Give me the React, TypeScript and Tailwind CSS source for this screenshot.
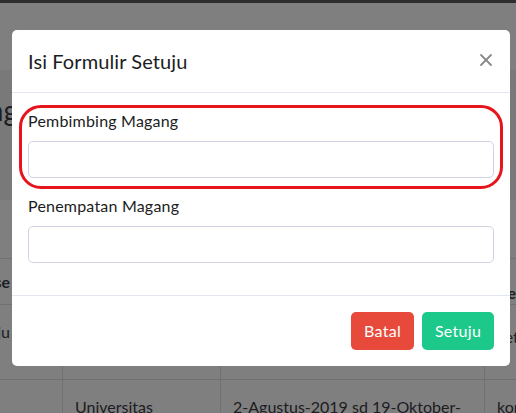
import { X } from 'lucide-react';

const font = { fontFamily: 'Lato, "Open Sans", sans-serif' };

function BackgroundPage() {
  return (
    <div className="w-[516px] h-[413px] bg-white overflow-hidden text-[#3a3b45]">
      <div className="h-[3px] bg-[#5a5a5a]" />
      <div className="h-[67px] bg-white" />
      {/* card header with heading */}
      <div className="h-[130px] bg-[#f3f3f3] pt-[26px]">
        <div className="w-[18px] flex justify-end">
          <h1 className="text-[28px] leading-none whitespace-nowrap">Data Magang</h1>
        </div>
      </div>
      <div className="h-[58px] bg-white" />
      {/* table, scrolled to the right */}
      <div className="-ml-[100px] w-[700px] whitespace-nowrap">
        <div className="grid grid-cols-[162px_158px_264px_116px] h-[47px] border-t border-b border-[#e3e3e3] font-bold">
          <div className="flex items-center justify-end pr-[52px]">Course</div>
          <div className="border-l border-[#e3e3e3]" />
          <div className="border-l border-[#e3e3e3]" />
          <div className="border-l border-[#e3e3e3] flex items-center pl-3 pt-[22px]">Keterangan</div>
        </div>
        <div className="grid grid-cols-[162px_158px_264px_116px] h-[75px] border-b border-[#e3e3e3]">
          <div className="flex items-center justify-end pr-[52px] pb-[20px]">Setuju</div>
          <div className="border-l border-[#e3e3e3]" />
          <div className="border-l border-[#e3e3e3]" />
          <div className="border-l border-[#e3e3e3] flex items-center pl-3 pb-[10px]">keterangan</div>
        </div>
        <div className="grid grid-cols-[162px_158px_264px_116px] h-[40px]">
          <div />
          <div className="border-l border-[#e3e3e3] pl-3 pt-[15px] text-[16px]">Universitas</div>
          <div className="border-l border-[#e3e3e3] pl-3 pt-[15px] text-[16px]">2-Agustus-2019 sd 19-Oktober-</div>
          <div className="border-l border-[#e3e3e3] pl-3 pt-[15px] text-[16px]">kontrak</div>
        </div>
      </div>
    </div>
  );
}

export default function App() {
  return (
    <div className="relative w-[516px] h-[413px] overflow-hidden" style={font}>
      <BackgroundPage />
      <div className="absolute inset-0 bg-black/50" />

      <div className="absolute left-[12px] top-[30px] w-[498px] bg-white rounded-[5px] text-[#1b1d22]">
        {/* Header */}
        <div className="flex items-center justify-between px-4 py-4 border-b border-[#e3e6f0]">
          <h2 className="text-[20px] leading-[30px] tracking-[0.1px]">Isi Formulir Setuju</h2>
          <button type="button" className="-mr-[2px] -mt-[3px] text-[#8a8a8a]">
            <X className="w-[20px] h-[20px]" strokeWidth={2.2} />
          </button>
        </div>

        {/* Body */}
        <div className="px-4 pt-4 pb-4">
          <div className="mb-4">
            <label className="block text-[16px] leading-6 mb-2 tracking-[0.2px]">Pembimbing Magang</label>
            <input className="block w-full h-[37px] border border-[#d1d3e2] rounded-[5px] outline-none" />
          </div>
          <div className="mb-4">
            <label className="block text-[16px] leading-6 mb-2 tracking-[0.2px]">Penempatan Magang</label>
            <input className="block w-full h-[37px] border border-[#d1d3e2] rounded-[5px] outline-none" />
          </div>
        </div>

        {/* Footer */}
        <div className="flex justify-end gap-2 p-4 border-t border-[#e3e6f0]">
          <button type="button" className="w-[63px] h-[38px] rounded-[5px] bg-[#e74a3b] text-white text-[16px] tracking-[0.3px]">
            Batal
          </button>
          <button type="button" className="w-[72px] h-[38px] rounded-[5px] bg-[#1cc88a] text-white text-[16px] tracking-[0.3px]">
            Setuju
          </button>
        </div>

        {/* red annotation */}
        <div className="absolute left-[7px] top-[75px] w-[484px] h-[84px] border-[3px] border-[#e8141c] rounded-[22px] pointer-events-none" />
      </div>
    </div>
  );
}
